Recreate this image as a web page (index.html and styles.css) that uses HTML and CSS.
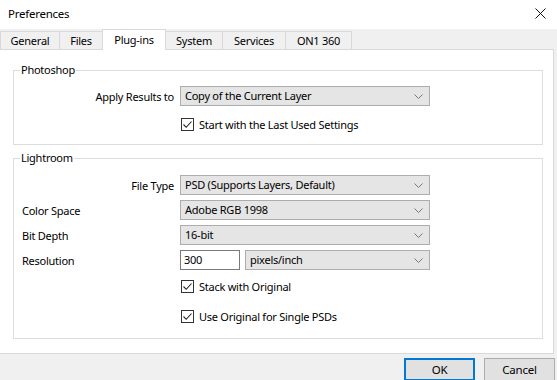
FILE: index.html
```html
<!DOCTYPE html>
<html lang="en">
<head>
  <meta charset="UTF-8">
  <title>Preferences</title>
  <link rel="stylesheet" href="styles.css">
</head>
<body>

<div class="dialog">
  <div class="titlebar">
    <span class="title">Preferences</span>
    <svg class="close" width="11" height="11" viewBox="0 0 11 11"><path d="M0.5 0.5L10.5 10.5M10.5 0.5L0.5 10.5" stroke="#111" stroke-width="1"/></svg>
  </div>

  <div class="tabs">
    <div class="tab t-general">General</div>
    <div class="tab t-files">Files</div>
    <div class="tab t-plugins active">Plug-ins</div>
    <div class="tab t-system">System</div>
    <div class="tab t-services">Services</div>
    <div class="tab t-on1">ON1 360</div>
  </div>

  <div class="page">
    <fieldset class="group group-ps">
      <legend>Photoshop</legend>
      <div class="row">
        <label class="lbl right">Apply Results to</label>
        <div class="select">Copy of the Current Layer<svg class="chev" width="9" height="5" viewBox="0 0 9 5"><path d="M0.5 0.5L4.5 4.5L8.5 0.5" fill="none" stroke="#777"/></svg></div>
      </div>
      <div class="row check-row">
        <span></span>
        <div class="check"><span class="box"><svg width="11" height="11" viewBox="0 0 11 11"><path d="M1.5 5.5L4.2 8.3L9.5 2.5" fill="none" stroke="#222" stroke-width="1.1"/></svg></span>Start with the Last Used Settings</div>
      </div>
    </fieldset>

    <fieldset class="group group-lr">
      <legend>Lightroom</legend>
      <div class="row">
        <label class="lbl right">File Type</label>
        <div class="select">PSD (Supports Layers, Default)<svg class="chev" width="9" height="5" viewBox="0 0 9 5"><path d="M0.5 0.5L4.5 4.5L8.5 0.5" fill="none" stroke="#777"/></svg></div>
      </div>
      <div class="row">
        <label class="lbl">Color Space</label>
        <div class="select">Adobe RGB 1998<svg class="chev" width="9" height="5" viewBox="0 0 9 5"><path d="M0.5 0.5L4.5 4.5L8.5 0.5" fill="none" stroke="#777"/></svg></div>
      </div>
      <div class="row">
        <label class="lbl">Bit Depth</label>
        <div class="select">16-bit<svg class="chev" width="9" height="5" viewBox="0 0 9 5"><path d="M0.5 0.5L4.5 4.5L8.5 0.5" fill="none" stroke="#777"/></svg></div>
      </div>
      <div class="row">
        <label class="lbl">Resolution</label>
        <div class="res">
          <div class="input">300</div>
          <div class="select">pixels/inch<svg class="chev" width="9" height="5" viewBox="0 0 9 5"><path d="M0.5 0.5L4.5 4.5L8.5 0.5" fill="none" stroke="#777"/></svg></div>
        </div>
      </div>
      <div class="row check-row cr1">
        <span></span>
        <div class="check"><span class="box"><svg width="11" height="11" viewBox="0 0 11 11"><path d="M1.5 5.5L4.2 8.3L9.5 2.5" fill="none" stroke="#222" stroke-width="1.1"/></svg></span>Stack with Original</div>
      </div>
      <div class="row check-row cr2">
        <span></span>
        <div class="check"><span class="box"><svg width="11" height="11" viewBox="0 0 11 11"><path d="M1.5 5.5L4.2 8.3L9.5 2.5" fill="none" stroke="#222" stroke-width="1.1"/></svg></span>Use Original for Single PSDs</div>
      </div>
    </fieldset>
  </div>

  <div class="footer">
    <button class="btn default">OK</button>
    <button class="btn">Cancel</button>
  </div>
</div>

</body>
</html>
```

FILE: styles.css
```css
html, body {
  margin: 0;
  padding: 0;
}
body {
  font-family: "Segoe UI", "Noto Sans", sans-serif;
  font-size: 11px;
  letter-spacing: -0.25px;
  color: #000;
  background: #f0f0f0;
  width: 557px;
  height: 380px;
  overflow: hidden;
}
.titlebar {
  height: 29px;
  background: #fff;
  display: flex;
  align-items: center;
  justify-content: space-between;
  padding: 0 11px 0 8px;
}
.title {
  font-size: 11.5px;
  margin-top: -2px;
}
.close {
  margin-top: -2px;
}
.tabs {
  display: flex;
  height: 20px;
  align-items: flex-end;
  position: relative;
  z-index: 1;
}
.tab {
  height: 18px;
  line-height: 17px;
  text-align: center;
  border: 1px solid #d9d9d9;
  border-bottom: none;
  border-left: none;
  background: #f0f0f0;
  box-sizing: border-box;
}
.t-general { width: 60px; border-left: 1px solid #d9d9d9; }
.t-files { width: 43px; }
.t-plugins { width: 64px; }
.t-system { width: 57px; }
.t-services { width: 63px; }
.t-on1 { width: 66px; }
.tab.active {
  height: 21px;
  margin-bottom: -1px;
  background: #fff;
  border-left: 1px solid #d9d9d9;
  margin-left: -1px;
  line-height: 19px;
}
.page {
  background: #fff;
  border: 1px solid #d9d9d9;
  border-left: none;
  width: 554px;
  height: 305px;
  box-sizing: border-box;
  padding-top: 12px;
}
.group {
  margin: 0 0 0 13px;
  width: 530px;
  box-sizing: border-box;
  border: 1px solid #dcdcdc;
  padding: 0 0 0 8px;
}
.group legend {
  padding: 0 1px;
  margin-left: -2px;
  line-height: 16px;
}
.group-ps {
  padding-top: 8px;
  padding-bottom: 10px;
}
.group-lr {
  margin-top: 5px;
  padding-top: 9px;
  padding-bottom: 12px;
}
.row {
  display: grid;
  grid-template-columns: 152px 250px;
  column-gap: 6px;
  height: 20px;
  align-items: center;
  margin-bottom: 5px;
}
.row:last-child {
  margin-bottom: 0;
}
.group-ps .row {
  margin-bottom: 8px;
}
.group-ps .row:last-child {
  margin-bottom: 0;
}
.cr1 {
  margin-top: 6px;
  margin-bottom: 10px;
}
.lbl.right {
  text-align: right;
}
.select {
  height: 20px;
  box-sizing: border-box;
  background: #e5e5e5;
  border: 1px solid #adadad;
  padding: 0 4px;
  line-height: 18px;
  position: relative;
}
.chev {
  position: absolute;
  right: 6px;
  top: 7px;
}
.res {
  display: flex;
  gap: 5px;
}
.input {
  width: 60px;
  height: 20px;
  box-sizing: border-box;
  border: 1px solid #7a7a7a;
  padding: 0 3px;
  line-height: 18px;
  background: #fff;
}
.res .select {
  flex: 1;
}
.check {
  display: flex;
  align-items: center;
  gap: 5px;
  padding-left: 1px;
}
.box {
  width: 13px;
  height: 13px;
  box-sizing: border-box;
  border: 1px solid #333;
  background: #fff;
  display: flex;
  align-items: center;
  justify-content: center;
}
.box svg {
  display: block;
}
.footer {
  display: flex;
  justify-content: flex-end;
  gap: 9px;
  padding: 4px 2px 0 0;
}
.btn {
  font-family: inherit;
  font-size: 11.5px;
  letter-spacing: inherit;
  width: 71px;
  height: 23px;
  background: #e1e1e1;
  border: 1px solid #adadad;
  padding: 0;
  color: #000;
}
.btn.default {
  border: 2px solid #0078d7;
}
```
